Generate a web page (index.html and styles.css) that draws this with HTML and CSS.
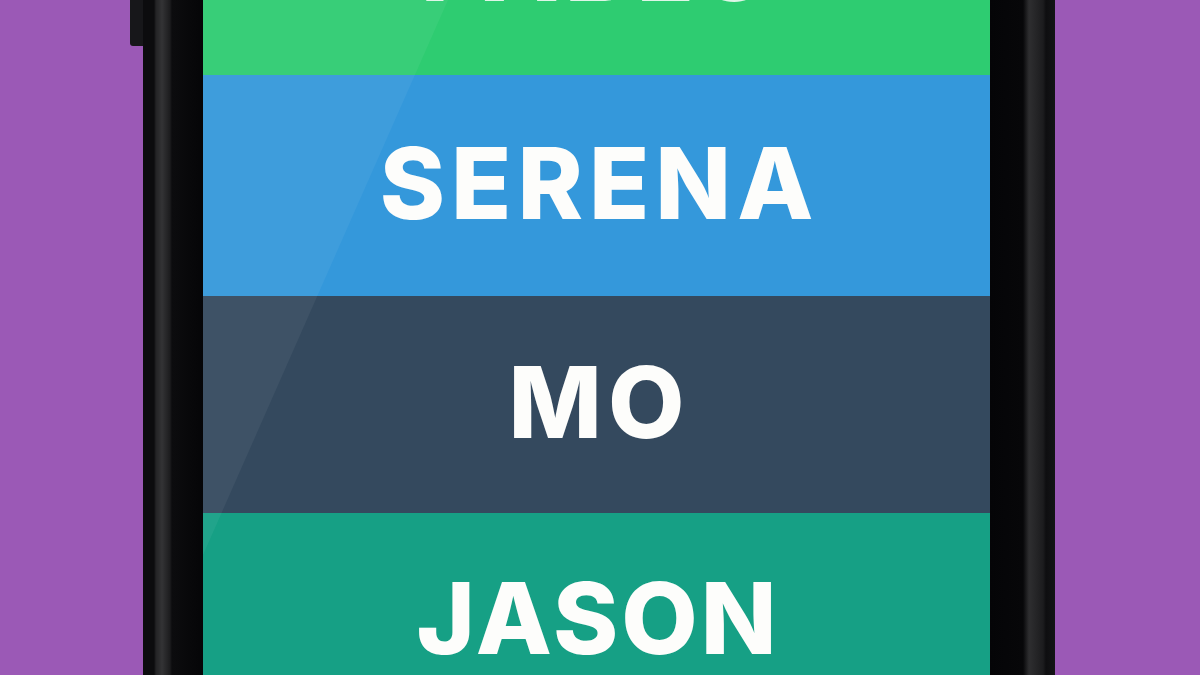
FILE: index.html
```html
<!DOCTYPE html>
<html>
<head>
<meta charset="utf-8">
<link rel="stylesheet" href="styles.css">
</head>
<body>
<div class="stage">
  <div class="phone">
    <div class="side-button"></div>
    <div class="screen">
      <div class="row row-green"><span class="name">PABLO</span></div>
      <div class="row row-blue"><span class="name">SERENA</span></div>
      <div class="row row-dark"><span class="name">MO</span></div>
      <div class="row row-teal"><span class="name name-tight">JASON</span></div>
      <div class="glare"></div>
    </div>
  </div>
</div>
</body>
</html>
```
FILE: styles.css
```css
html, body {
  margin: 0;
  padding: 0;
  width: 1200px;
  height: 675px;
  overflow: hidden;
  background: #9b59b6;
}

.stage {
  display: flex;
  padding-left: 143px;
  height: 675px;
}

.phone {
  position: relative;
  width: 912px;
  height: 675px;
  box-sizing: border-box;
  padding: 0 65px 0 60px;
  background: linear-gradient(to right,
    #0c0c0e 0px, #0c0c0e 11px,
    #242426 13px, #333335 19px, #1c1c1e 27px,
    #0c0c0e 29px, #050507 60px,
    #050507 846px, #070709 880px,
    #2e2e30 886px, #1c1c1e 900px,
    #0e0e10 903px, #141416 912px);
}

.side-button {
  position: absolute;
  left: -13px;
  top: 0;
  width: 13px;
  height: 46px;
  background: #17171a;
  border-radius: 0 0 0 3px;
}

.screen {
  position: relative;
  width: 787px;
  height: 675px;
  overflow: hidden;
  display: flex;
  flex-direction: column;
}

.row {
  flex: none;
  height: 219px;
  display: flex;
  align-items: center;
  justify-content: center;
}

.row-green {
  background: #2ecc71;
  margin-top: -144px;
}

.row-green .name {
  top: 0;
  color: rgba(253, 253, 251, 0.85);
}

.row-blue {
  background: #3498db;
  height: 221px;
}

.row-dark {
  background: #34495e;
  height: 217px;
}

.row-teal {
  background: #16a085;
}

.row-teal .name {
  top: -4px;
}

.name {
  font-family: Inter, "Open Sans", sans-serif;
  font-weight: 800;
  font-size: 99px;
  line-height: 1;
  color: #fdfdfb;
  letter-spacing: 6px;
  margin-right: -6px;
  position: relative;
  top: -2px;
}

.name-tight {
  letter-spacing: 3px;
  margin-right: -3px;
}

.glare {
  position: absolute;
  left: 0;
  top: 0;
  width: 300px;
  height: 600px;
  background: rgba(255, 255, 255, 0.05);
  clip-path: polygon(0 0, 245px 0, 0 555px);
}
```
